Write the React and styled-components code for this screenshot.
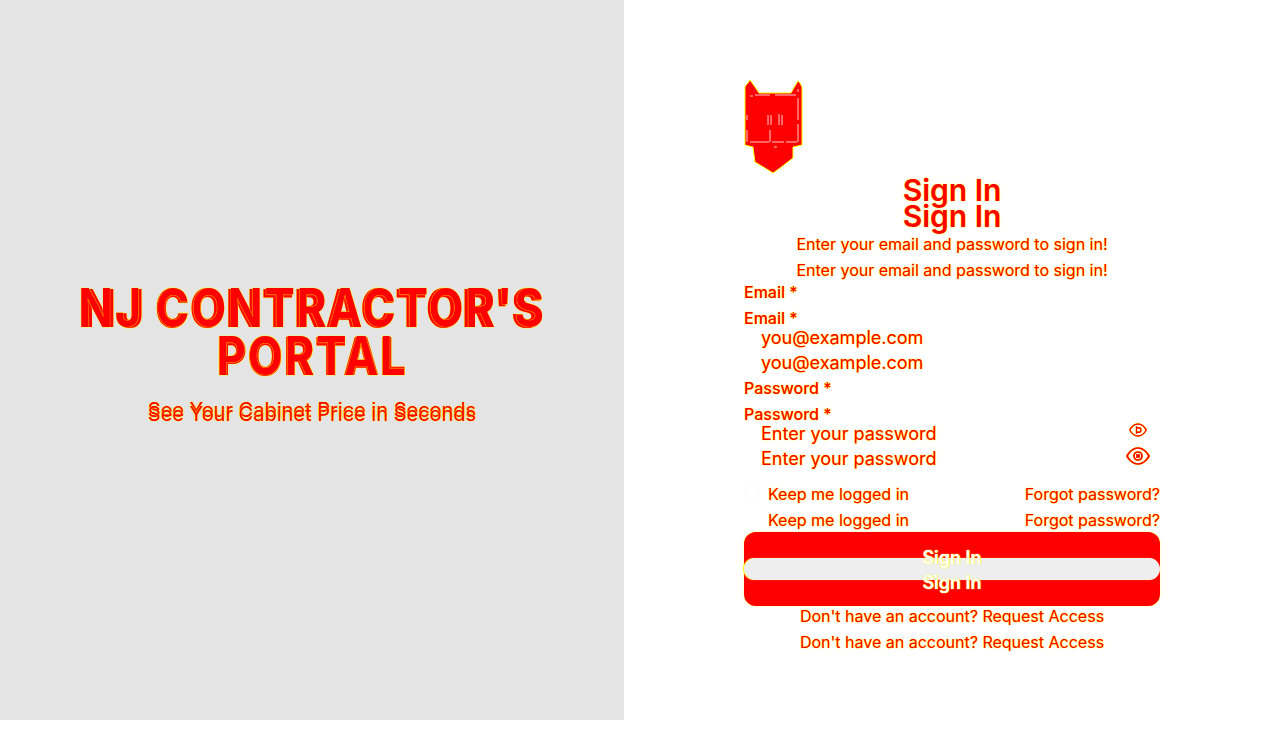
import React from 'react';
import styled, { createGlobalStyle, css } from 'styled-components';

const red = '#ff0000';
const yellow = '#ffff00';
const edge = css`
  color: ${red};
  text-shadow: 0 0 1px ${yellow}, 0 0 1px ${yellow};
`;

const Global = createGlobalStyle`
  html, body { margin: 0; padding: 0; background: #fff; }
  body { font-family: Inter, "Liberation Sans", sans-serif; }
`;

const Page = styled.div`
  display: grid;
  grid-template-columns: 624px 656px;
  width: 1280px;
  height: 720px;
`;

// ---- left panel

const Hero = styled.section`
  display: flex;
  flex-direction: column;
  align-items: center;
  padding-top: 284px;
  background: #e4e4e4;
`;

const TitleWrap = styled.div`
  position: relative;
  width: 560px;
  transform: scaleY(1.17);
  transform-origin: top center;
`;

const Title = styled.h1`
  margin: 0;
  font-size: 45px;
  line-height: 41px;
  font-weight: 900;
  letter-spacing: 1.3px;
  text-align: center;
  ${edge}
`;

const TitleGhost = styled(Title)`
  position: absolute;
  top: 0;
  left: 0;
  width: 100%;
  font-weight: 700;
  font-size: 45.5px;
  letter-spacing: 1.8px;
`;

const TaglineWrap = styled.div`
  position: relative;
  margin-top: 32px;
  width: 560px;
`;

const Tagline = styled.p`
  margin: 0;
  font-size: 20px;
  line-height: 24px;
  text-align: center;
  ${edge}
`;

const TaglineGhost = styled(Tagline)`
  position: absolute;
  top: 4px;
  left: 0;
  width: 100%;
`;

// ---- right panel

const Side = styled.section`
  display: flex;
  justify-content: center;
  padding-top: 80px;
`;

const Column = styled.div`
  display: flex;
  flex-direction: column;
  width: 416px;
`;

const Logo = styled.svg`
  display: block;
  width: 60px;
  height: 95px;
  margin-bottom: 2px;
`;

const Heading = styled.h2`
  margin: 0;
  font-size: 30px;
  line-height: 26px;
  font-weight: 600;
  text-align: center;
  ${edge}
`;

const Sub = styled.p`
  margin: ${({ $top }) => $top}px 0 0;
  font-size: 16px;
  line-height: 26px;
  text-align: center;
  ${edge}
`;

const Label = styled.label`
  display: block;
  margin-top: ${({ $top }) => $top}px;
  font-size: 16px;
  line-height: 20px;
  font-weight: 500;
  ${edge}
`;

const FieldBox = styled.div`
  position: relative;

  &::before {
    content: '';
    position: absolute;
    z-index: -1;
    top: -9px;
    left: 0;
    right: 0;
    height: 38px;
    border: 1px solid #fcfcfc;
    border-radius: 10px;
  }
`;

const Field = styled.div`
  position: relative;
  display: flex;
  align-items: center;
  justify-content: space-between;
  height: 18px;
  margin-top: ${({ $top }) => $top || 0}px;
  padding: 0 11px 0 17px;
  font-size: 18px;
  ${edge}
`;

const Eye = styled.svg`
  display: block;
  width: ${({ $size }) => $size}px;
  height: ${({ $size }) => $size}px;
  margin-right: ${({ $right }) => $right}px;
  margin-bottom: ${({ $lift }) => $lift}px;
  fill: none;
  stroke: ${red};
  stroke-width: 1.7;
  filter: drop-shadow(0 0 0.5px ${yellow}) drop-shadow(0 0 0.5px ${yellow});
`;

const Options = styled.div`
  display: flex;
  justify-content: space-between;
  height: 20px;
  margin-top: ${({ $top }) => $top}px;
  font-size: 16px;
  line-height: 20px;
  ${edge}
`;

const Keep = styled.span`
  display: flex;
  align-items: center;
  gap: 8px;
`;

const Radio = styled.i`
  display: block;
  width: 14px;
  height: 14px;
  border: 1px solid ${({ $faint }) => ($faint ? '#fcfcfc' : '#fff')};
  border-radius: 50%;
`;

const SubmitButton = styled.button`
  position: relative;
  display: flex;
  flex-direction: column;
  align-items: center;
  height: 74px;
  margin-top: 2px;
  padding: 16px 0 0;
  border: 0;
  border-radius: 12px;
  background: ${red};
  box-shadow: 0 0 1px ${yellow}, 0 0 1px ${yellow};
  font-family: inherit;
`;

const Band = styled.span`
  position: absolute;
  top: 26px;
  left: 0;
  right: 0;
  height: 22px;
  border-radius: 11px;
  background: #eeeeee;
  box-shadow: -1px 0 1px ${yellow};
`;

const ButtonText = styled.span`
  position: relative;
  height: 25px;
  font-size: 18px;
  line-height: 20px;
  font-weight: 600;
  color: #fff;
  text-shadow: 0 0 1px ${yellow}, 0 0 1px ${yellow};
`;

const Foot = styled.p`
  margin: ${({ $top }) => $top}px 0 0;
  font-size: 16px;
  line-height: 20px;
  text-align: center;
  ${edge}
`;

const EyeSmall = () => (
  <Eye $size={18} $right={2} $lift={6} viewBox="0 0 24 24">
    <path d="M1 12s4-8 11-8 11 8 11 8-4 8-11 8-11-8-11-8z" />
    <path d="M10 7v10M10 9h3a3 3 0 0 1 0 6h-3" />
  </Eye>
);

const EyeBig = () => (
  <Eye $size={24} $right={-1} $lift={4} viewBox="0 0 24 24">
    <path d="M1 12s4-8 11-8 11 8 11 8-4 8-11 8-11-8-11-8z" />
    <circle cx="12" cy="12" r="4" />
    <rect x="11" y="11" width="2" height="2" />
  </Eye>
);

const App = () => (
  <Page>
    <Global />
    <Hero>
      <TitleWrap>
        <Title>NJ CONTRACTOR'S PORTAL</Title>
        <TitleGhost aria-hidden="true">NJ CONTRACTOR'S PORTAL</TitleGhost>
      </TitleWrap>
      <TaglineWrap>
        <Tagline>See Your Cabinet Price in Seconds</Tagline>
        <TaglineGhost aria-hidden="true">See Your Cabinet Price in Seconds</TaglineGhost>
      </TaglineWrap>
    </Hero>
    <Side>
      <Column>
        <Logo viewBox="0 0 60 95">
          <path
            d="M6 0 L4 3 L2 5 L1 7 L1 65 L9 67 L10 75 L11 82 L21 88 L29 93 L36 88 L45 81 L49 78 L49 67 L58 65 L58 7 L56 3 L54 1 L51 6 L47 13 L15 13 L11 7 Z"
            fill={red}
            stroke={yellow}
            strokeWidth="1"
          />
          <path
            d="M6 16H9M11 15H26M31 15H52M54 9V12M54 18V40M54 44V62M3 35V40M3 50V62M6 62H25M28 62H40M42 62H53M24 35V45M27 35V45M35 34V45M38 35V45M26 50V62M30 67H33"
            fill="none"
            stroke="#fff"
            strokeWidth="0.8"
          />
        </Logo>
        <Heading>Sign In</Heading>
        <Heading>Sign In</Heading>
        <Sub $top={2}>Enter your email and password to sign in!</Sub>
        <Sub $top={0}>Enter your email and password to sign in!</Sub>
        <Label $top={-1}>Email *</Label>
        <Label $top={6}>Email *</Label>
        <FieldBox>
          <Field>you@example.com</Field>
          <Field $top={7}>you@example.com</Field>
        </FieldBox>
        <Label $top={7}>Password *</Label>
        <Label $top={6}>Password *</Label>
        <FieldBox>
          <Field>
            Enter your password
            <EyeSmall />
          </Field>
          <Field $top={7}>
            Enter your password
            <EyeBig />
          </Field>
        </FieldBox>
        <Options $top={17}>
          <Keep>
            <Radio $faint />
            Keep me logged in
          </Keep>
          <span>Forgot password?</span>
        </Options>
        <Options $top={6}>
          <Keep>
            <Radio />
            Keep me logged in
          </Keep>
          <span>Forgot password?</span>
        </Options>
        <SubmitButton type="button">
          <Band />
          <ButtonText>Sign In</ButtonText>
          <ButtonText>Sign In</ButtonText>
        </SubmitButton>
        <Foot $top={0}>Don't have an account? Request Access</Foot>
        <Foot $top={6}>Don't have an account? Request Access</Foot>
      </Column>
    </Side>
  </Page>
);

export default App;
